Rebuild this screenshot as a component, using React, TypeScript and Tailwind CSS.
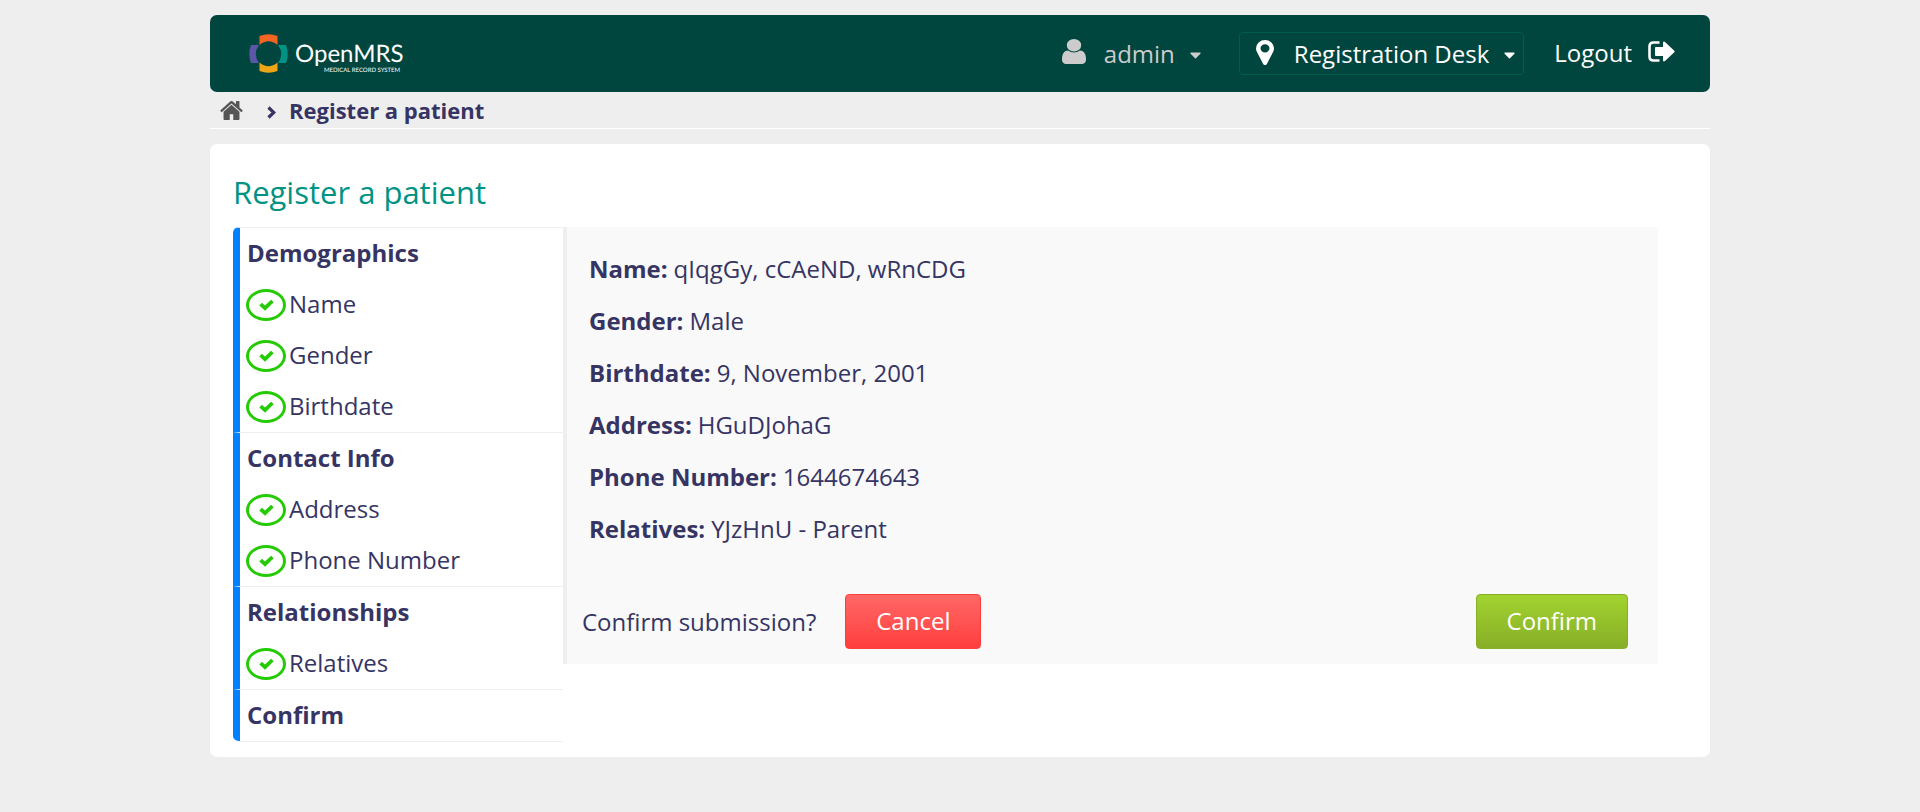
import type { ReactNode } from 'react';

const USER =
  'M1536 1399q0 109-62.5 187t-150.5 78h-854q-88 0-150.5-78t-62.5-187q0-85 8.5-160.5t31.5-152 58.5-131 94-89 134.5-34.5q131 128 313 128t313-128q76 0 134.5 34.5t94 89 58.5 131 31.5 152 8.5 160.5zm-256-887q0 159-112.5 271.5t-271.5 112.5-271.5-112.5-112.5-271.5 112.5-271.5 271.5-112.5 271.5 112.5 112.5 271.5z';
const MARKER =
  'M1152 640q0-106-75-181t-181-75-181 75-75 181 75 181 181 75 181-75 75-181zm256 0q0 109-33 179l-364 774q-16 33-47.5 52t-67.5 19-67.5-19-46.5-52l-365-774q-33-70-33-179 0-212 150-362t362-150 362 150 150 362z';
const HOME =
  'M1472 992v480q0 26-19 45t-45 19h-384v-384h-256v384h-384q-26 0-45-19t-19-45v-480q0-1 .5-3t.5-3l575-474 575 474q1 2 1 6zm223-69l-62 74q-8 9-21 11h-3q-13 0-21-7l-692-577-692 577q-12 8-24 7-13-2-21-11l-62-74q-8-10-7-23.5t11-21.5l719-599q32-26 76-26t76 26l244 204v-195q0-14 9-23t23-9h192q14 0 23 9t9 23v408l219 182q10 8 11 21.5t-7 23.5z';

function Logo() {
  return (
    <svg viewBox="0 0 160 42" className="h-[42px] w-[160px]" role="img" aria-label="OpenMRS Medical Record System">
      <path d="M10.500 12V3Q19.500-0.500 28.500 3V12Q19.500 4.500 10.500 12Z" fill="#f26522" />
      <path d="M10.500 29.500V38Q19.500 41.500 28.500 38V29.500Q19.500 37 10.500 29.500Z" fill="#eea616" />
      <path d="M10 12H2Q-1.500 21 2 30H10Q3.500 21 10 12Z" fill="#5b57a6" />
      <path d="M29 12H37Q40.500 21 37 30H29Q35.500 21 29 12Z" fill="#009384" />
      <text x="46" y="29" fontSize="24" fill="#fff" fontFamily="Lato, sans-serif" textRendering="geometricPrecision">
        OpenMRS
      </text>
      <text x="75" y="39" fontSize="6" fill="#fff" fontFamily="Lato, sans-serif" textRendering="geometricPrecision">
        MEDICAL RECORD SYSTEM
      </text>
    </svg>
  );
}

function Caret() {
  return (
    <svg viewBox="0 0 11 7" className="mt-[3px] h-[7px] w-[11px]" fill="currentColor" aria-hidden="true">
      <path d="M0.800 0.500h9.400q.8.500.2 1.200L6 6.200q-.5.400-1 0L.6 1.700q-.6-.7.2-1.200Z" />
    </svg>
  );
}

function Done() {
  return (
    <span className="flex h-8 w-10 shrink-0 items-center justify-center rounded-[50%] border-3 border-[#24cb04]">
      <svg viewBox="0 0 15 12" className="h-3 w-[15px]" aria-hidden="true">
        <path d="M1.600 5.200 6 9.200 13.400 2" fill="none" stroke="#24cb04" strokeWidth="3.800" />
      </svg>
    </span>
  );
}

const sections = [
  { title: 'Demographics', items: ['Name', 'Gender', 'Birthdate'] },
  { title: 'Contact Info', items: ['Address', 'Phone Number'] },
  { title: 'Relationships', items: ['Relatives'] },
  { title: 'Confirm', items: [] },
];

const details = [
  ['Name', 'qIqgGy, cCAeND, wRnCDG'],
  ['Gender', 'Male'],
  ['Birthdate', '9, November, 2001'],
  ['Address', 'HGuDJohaG'],
  ['Phone Number', '1644674643'],
  ['Relatives', 'YJzHnU - Parent'],
];

function ActionButton({ className, children }: { className: string; children: ReactNode }) {
  return (
    <button type="button" className={`h-[55px] rounded-[4px] border px-[30px] pb-[2px] text-white ${className}`}>
      {children}
    </button>
  );
}

export default function App() {
  return (
    <div className="min-h-screen bg-[#eeeeee] py-[15px] font-['Open_Sans',sans-serif] text-[24px] leading-[33px] text-[#363463]">
      <div className="mx-auto max-w-[1500px]">
        <header className="flex h-[77px] items-center justify-between rounded-[7px] bg-[#00463f] pr-[35px] pl-[39px] text-white">
          <a href="#home">
            <Logo />
          </a>
          <div className="flex items-center">
            <button type="button" className="flex items-center text-[#cccccc]">
              <svg viewBox="256 128 1280 1536" className="mr-[18px] mb-1 h-[25px] w-6" preserveAspectRatio="none" fill="currentColor" aria-hidden="true">
                <path d={USER} />
              </svg>
              admin
              <span className="ml-[15px]">
                <Caret />
              </span>
            </button>
            <button type="button" className="ml-[38px] flex h-[43px] items-center rounded-[4px] border border-[#005c50] px-2">
              <svg viewBox="384 128 1024 1536" className="mr-5 mb-[2px] ml-2 h-[25px] w-[18px]" preserveAspectRatio="none" fill="currentColor" aria-hidden="true">
                <path d={MARKER} />
              </svg>
              Registration Desk
              <span className="ml-[15px]">
                <Caret />
              </span>
            </button>
            <a href="#logout" className="mb-[2px] ml-[30px] flex items-center gap-4">
              Logout
              <svg viewBox="0 0 27 21" className="mb-[2px] h-[21px] w-[27px]" aria-hidden="true">
                <path d="M11.500 1.500H5.500Q1.500 1.500 1.500 5.500V15.500Q1.500 19.500 5.500 19.500H11.500" fill="none" stroke="#fff" strokeWidth="2.600" />
                <path d="M7 7Q7 6 8 6H15V1.500Q15.500 0 17 1L26.300 9.800Q27 10.500 26.300 11.200L17 20Q15.500 21 15 19.500V15H8Q7 15 7 14Z" fill="#fff" />
              </svg>
            </a>
          </div>
        </header>

        <nav aria-label="Breadcrumb" className="flex h-[37px] items-center border-b border-white pl-[10px] text-[22px] font-bold">
          <a href="#home" aria-label="Home">
            <svg viewBox="64 256 1664 1280" className="h-[19px] w-[23px]" preserveAspectRatio="none" fill="#555555" aria-hidden="true">
              <path d={HOME} />
            </svg>
          </a>
          <svg viewBox="0 0 9 13" className="mt-1 mr-[13px] ml-6 h-[13px] w-[9px]" aria-hidden="true">
            <path d="M1.500 1.500 6.800 6.500 1.500 11.500" fill="none" stroke="#363463" strokeWidth="3.200" />
          </svg>
          Register a patient
        </nav>

        <main className="mt-[15px] rounded-[7px] bg-white px-[23px] pt-[26px] pb-[15px]">
          <h2 className="mb-[13px] text-[31px] leading-[44px] font-normal text-[#009384]">Register a patient</h2>
          <div className="flex items-start">
            <ul className="w-[330px] shrink-0 overflow-hidden rounded-l-[6px] border-b border-[#eeeeee]">
              {sections.map((section) => (
                <li key={section.title} className="border-t border-l-7 border-t-[#eeeeee] border-l-[#007fff]">
                  <div className="flex h-[51px] items-center pb-[2px] pl-[7px] font-bold">{section.title}</div>
                  <ul>
                    {section.items.map((item) => (
                      <li key={item} className="flex h-[51px] items-center gap-[3px] pl-[6px]">
                        <Done />
                        <span className="pb-[2px]">{item}</span>
                      </li>
                    ))}
                  </ul>
                </li>
              ))}
            </ul>
            <section className="mr-[29px] flex-1 border-l-4 border-[#eeeeee] bg-[#f9f9f9] pt-4 pr-[30px] pb-[15px] pl-[15px]">
              <dl className="pl-[7px] leading-[52px]">
                {details.map(([label, value]) => (
                  <div key={label} className="flex gap-[6px]">
                    <dt className="font-bold">{label}:</dt>
                    <dd>{value}</dd>
                  </div>
                ))}
              </dl>
              <div className="mt-[39px] flex items-center">
                <span>Confirm submission?</span>
                <ActionButton className="ml-[29px] border-[#ff3d3d] bg-linear-to-b from-[#ff6666] to-[#ff3d3d]">Cancel</ActionButton>
                <ActionButton className="ml-auto border-[#88af28] bg-linear-to-b from-[#a1d32f] to-[#88af28]">Confirm</ActionButton>
              </div>
            </section>
          </div>
        </main>
      </div>
    </div>
  );
}
